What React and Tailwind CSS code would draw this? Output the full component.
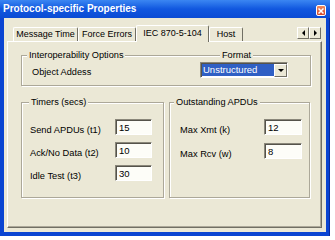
import React from 'react';

const face = 'bg-[#ebe8d6]';

function Field({ value, w }) {
  return (
    <div
      className={`${w} h-[16px] bg-[#fdfdf8] border border-[#8a877a] border-b-white border-r-white shadow-[inset_1px_1px_0_#55534b] pl-[3px] pt-[2px] text-[9.5px] leading-[11px] text-black`}
    >
      {value}
    </div>
  );
}

function Row({ label, value, w }) {
  return (
    <div className="flex h-[16px] items-start justify-between">
      <span className="pt-[6px] text-[9.3px] leading-[11px]">{label}</span>
      <Field value={value} w={w} />
    </div>
  );
}

function GroupLabel({ children, className = '' }) {
  return (
    <span className={`-mt-[6px] self-start px-[2px] text-[9.2px] leading-[11px] ${face} ${className}`}>
      {children}
    </span>
  );
}

export default function App() {
  const tabs = [
    { name: 'Message Time', w: 'w-[65px]' },
    { name: 'Force Errors', w: 'w-[58px]' },
    { name: 'IEC 870-5-104', w: 'w-[73px]', active: true },
    { name: 'Host', w: 'w-[34px]' },
  ];

  return (
    <div className="w-[335px] h-[240px] bg-white font-['Liberation_Sans',Arial,sans-serif] text-black">
      <div className="w-[330px] h-[236px] flex flex-col bg-[#0b45d2] shadow-[inset_-1px_0_0_#0a2a9c]">
        {/* title bar */}
        <div className="h-[18px] flex items-center justify-between pl-[3px] pr-[4px] bg-gradient-to-b from-[#3b86f2] via-[#1157df] to-[#0b4bd4]">
          <span className="text-[10px] font-bold text-white leading-none">Protocol-specific Properties</span>
          <div className="mt-[3px] w-[10px] h-[11px] rounded-[2px] border border-white bg-gradient-to-b from-[#f08a5e] to-[#d4452a] flex items-center justify-center">
            <svg width="6" height="6" viewBox="0 0 6 6">
              <path d="M0.5 0.5L5.5 5.5M5.5 0.5L0.5 5.5" stroke="white" strokeWidth="1.5" />
            </svg>
          </div>
        </div>

        {/* body */}
        <div className={`flex-1 mx-[4px] mb-[4px] ${face} flex flex-col pl-[3px] pr-[4px] pt-[7px] pb-[4px]`}>
          {/* tabs */}
          <div className="flex items-end h-[16px] pl-[6px] pr-[1px]">
            {tabs.map((t) =>
              t.active ? (
                <div
                  key={t.name}
                  className={`${t.w} relative z-10 h-[17px] -mb-[1px] flex items-start justify-center pt-[2px] ${face} border-l border-t border-white border-r border-r-[#716f64] rounded-t-[2px] text-[9px] leading-[11px]`}
                >
                  {t.name}
                </div>
              ) : (
                <div
                  key={t.name}
                  className={`${t.w} h-[14px] flex items-center justify-center border-l border-t border-white border-r border-r-[#716f64] rounded-t-[2px] text-[9px] leading-[11px]`}
                >
                  {t.name}
                </div>
              )
            )}
            <div className="flex-1" />
            <div className="flex mb-[2px]">
              {['l', 'r'].map((d) => (
                <div
                  key={d}
                  className={`w-[12px] h-[12px] ${face} border border-white border-b-[#716f64] border-r-[#716f64] flex items-center justify-center`}
                >
                  {d === 'l' ? (
                    <div className="w-0 h-0 border-y-[3px] border-y-transparent border-r-[3px] border-r-black" />
                  ) : (
                    <div className="w-0 h-0 border-y-[3px] border-y-transparent border-l-[3px] border-l-black" />
                  )}
                </div>
              ))}
            </div>
          </div>

          {/* panel */}
          <div className="flex-1 border border-white border-r-[#716f64] border-b-[#716f64] shadow-[inset_-1px_-1px_0_#aca899] pl-[13px] pr-[10px]">
            {/* interoperability */}
            <div className="mt-[13px] h-[31px] flex border border-[#aca899] shadow-[1px_1px_0_#fff,inset_1px_1px_0_#fff]">
              <div className="flex-1 flex flex-col">
                <GroupLabel className="ml-[5px]">Interoperability Options</GroupLabel>
                <span className="ml-[10px] mt-[6px] text-[9.2px] leading-[11px]">Object Addess</span>
              </div>
              <div className="w-[88px] mr-[22px] flex flex-col">
                <GroupLabel className="ml-[20px] px-[1px]">Format</GroupLabel>
                <div className="mt-[1px] h-[16px] flex bg-white border border-[#8a877a] border-b-white border-r-white shadow-[inset_1px_1px_0_#55534b] pl-[1px] pt-[1px]">
                  <div className="flex-1 h-[12px] bg-[#2f5fc4] text-white text-[9.5px] leading-[12px] pl-[1px]">
                    Unstructured
                  </div>
                  <div className={`w-[13px] h-[13px] ${face} border border-white border-b-[#716f64] border-r-[#716f64] flex items-center justify-center`}>
                    <div className="w-0 h-0 border-x-[3px] border-x-transparent border-t-[3px] border-t-black" />
                  </div>
                </div>
              </div>
            </div>

            {/* timers & outstanding */}
            <div className="mt-[16px] flex gap-[5px]">
              <div className="w-[143px] h-[96px] flex flex-col border border-[#aca899] shadow-[1px_1px_0_#fff,inset_1px_1px_0_#fff] pl-[8px] pr-[11px]">
                <GroupLabel className="-ml-[1px]">Timers (secs)</GroupLabel>
                <div className="mt-[11px] flex flex-col gap-[7px]">
                  <Row label="Send APDUs (t1)" value="15" w="w-[37px]" />
                  <Row label="Ack/No Data (t2)" value="10" w="w-[37px]" />
                  <Row label="Idle Test (t3)" value="30" w="w-[37px]" />
                </div>
              </div>
              <div className="w-[141px] h-[96px] flex flex-col border border-[#aca899] shadow-[1px_1px_0_#fff,inset_1px_1px_0_#fff] pl-[10px] pr-[7px]">
                <GroupLabel className="-ml-[6px]">Outstanding APDUs</GroupLabel>
                <div className="mt-[11px] flex flex-col gap-[8px]">
                  <Row label="Max Xmt (k)" value="12" w="w-[38px]" />
                  <Row label="Max Rcv (w)" value="8" w="w-[38px]" />
                </div>
              </div>
            </div>
          </div>
        </div>
      </div>
    </div>
  );
}
